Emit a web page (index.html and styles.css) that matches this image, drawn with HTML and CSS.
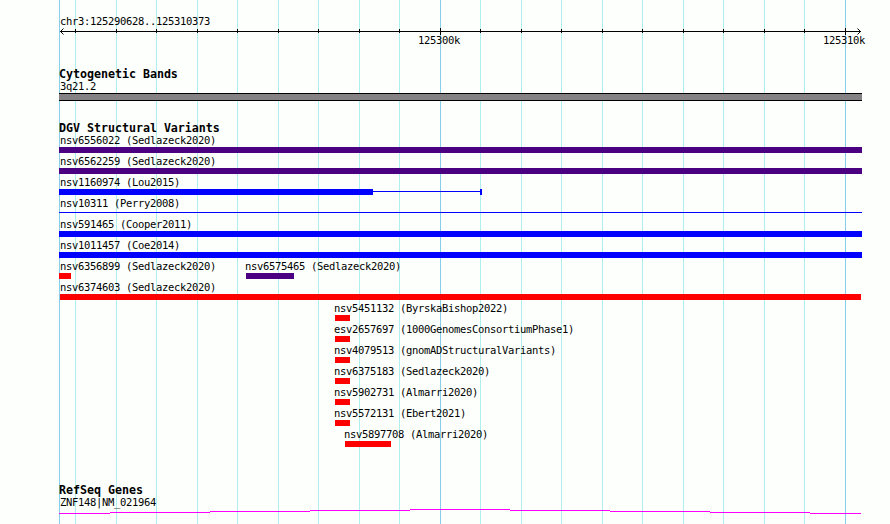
FILE: index.html
```html
<!DOCTYPE html>
<html>
<head>
    <meta charset="utf-8">
    <title>chr3:125290628..125310373</title>
    <link rel="stylesheet" href="styles.css">
</head>
<body>
    <div class="browser">
        <svg class="grid" width="890" height="524">
            <path class="minor" d="M75.5 0V524M116.5 0V524M156.5 0V524M197.5 0V524M237.5 0V524M278.5 0V524M318.5 0V524M359.5 0V524M399.5 0V524M480.5 0V524M521.5 0V524M561.5 0V524M602.5 0V524M642.5 0V524M683.5 0V524M723.5 0V524M764.5 0V524M804.5 0V524"/>
            <path class="major" d="M59.5 0V524M440.5 0V524M845.5 0V524"/>
        </svg>

        <div class="panel">
            <div class="ruler">
                <div class="label">chr3:125290628..125310373</div>
                <svg class="axis" width="831" height="20">
                    <path d="M1 3.5H802"/>
                    <path d="M16.5 1v4M57.5 1v4M97.5 1v4M138.5 1v4M178.5 1v4M219.5 1v4M259.5 1v4M300.5 1v4M340.5 1v4M421.5 1v4M462.5 1v4M502.5 1v4M543.5 1v4M583.5 1v4M624.5 1v4M664.5 1v4M705.5 1v4M745.5 1v4"/>
                    <path d="M381.5 0v7M786.5 0v7"/>
                    <path class="arrow" d="M4.5 0.5L1.5 3.5L4.5 6.5M798.5 0.5L801.5 3.5L798.5 6.5"/>
                    <text x="359" y="16">125300k</text>
                    <text x="764" y="16">125310k</text>
                </svg>
            </div>

            <div class="track cytoband">
                <h2>Cytogenetic Bands</h2>
                <div class="label">3q21.2</div>
                <div class="band"></div>
            </div>

            <div class="track variants">
                <h2>DGV Structural Variants</h2>
                <div class="row">
                    <div class="feature">
                        <div class="label">nsv6556022 (Sedlazeck2020)</div>
                        <div class="bar indigo" style="width: 803px"></div>
                    </div>
                </div>
                <div class="row">
                    <div class="feature">
                        <div class="label">nsv6562259 (Sedlazeck2020)</div>
                        <div class="bar indigo" style="width: 803px"></div>
                    </div>
                </div>
                <div class="row">
                    <div class="feature">
                        <div class="label">nsv1160974 (Lou2015)</div>
                        <div class="segments">
                            <div class="bar blue" style="width: 314px"></div>
                            <div class="connector" style="width: 107px"></div>
                            <div class="bar blue" style="width: 2px"></div>
                        </div>
                    </div>
                </div>
                <div class="row">
                    <div class="feature">
                        <div class="label">nsv10311 (Perry2008)</div>
                        <div class="segments">
                            <div class="connector" style="width: 803px"></div>
                        </div>
                    </div>
                </div>
                <div class="row">
                    <div class="feature">
                        <div class="label">nsv591465 (Cooper2011)</div>
                        <div class="bar blue" style="width: 803px"></div>
                    </div>
                </div>
                <div class="row">
                    <div class="feature">
                        <div class="label">nsv1011457 (Coe2014)</div>
                        <div class="bar blue" style="width: 803px"></div>
                    </div>
                </div>
                <div class="row">
                    <div class="feature" style="width: 187px">
                        <div class="label">nsv6356899 (Sedlazeck2020)</div>
                        <div class="bar red" style="width: 12px"></div>
                    </div>
                    <div class="feature inner">
                        <div class="label">nsv6575465 (Sedlazeck2020)</div>
                        <div class="bar indigo" style="width: 48px"></div>
                    </div>
                </div>
                <div class="row" style="padding-left: 1px">
                    <div class="feature first">
                        <div class="label">nsv6374603 (Sedlazeck2020)</div>
                        <div class="bar red" style="width: 801px"></div>
                    </div>
                </div>
                <div class="row" style="padding-left: 276px">
                    <div class="feature inner">
                        <div class="label">nsv5451132 (ByrskaBishop2022)</div>
                        <div class="bar red" style="width: 15px"></div>
                    </div>
                </div>
                <div class="row" style="padding-left: 276px">
                    <div class="feature inner">
                        <div class="label">esv2657697 (1000GenomesConsortiumPhase1)</div>
                        <div class="bar red" style="width: 15px"></div>
                    </div>
                </div>
                <div class="row" style="padding-left: 276px">
                    <div class="feature inner">
                        <div class="label">nsv4079513 (gnomADStructuralVariants)</div>
                        <div class="bar red" style="width: 15px"></div>
                    </div>
                </div>
                <div class="row" style="padding-left: 276px">
                    <div class="feature inner">
                        <div class="label">nsv6375183 (Sedlazeck2020)</div>
                        <div class="bar red" style="width: 15px"></div>
                    </div>
                </div>
                <div class="row" style="padding-left: 276px">
                    <div class="feature inner">
                        <div class="label">nsv5902731 (Almarri2020)</div>
                        <div class="bar red" style="width: 15px"></div>
                    </div>
                </div>
                <div class="row" style="padding-left: 276px">
                    <div class="feature inner">
                        <div class="label">nsv5572131 (Ebert2021)</div>
                        <div class="bar red" style="width: 15px"></div>
                    </div>
                </div>
                <div class="row" style="padding-left: 286px">
                    <div class="feature inner">
                        <div class="label">nsv5897708 (Almarri2020)</div>
                        <div class="bar red" style="width: 46px"></div>
                    </div>
                </div>
            </div>

            <div class="track genes">
                <h2>RefSeq Genes</h2>
                <div class="label">ZNF148|NM_021964</div>
                <svg class="gene" width="803" height="5">
                    <path d="M0 4.5H51M51 3.5H151M151 2.5H251M251 1.5H351M351 0.5H451M451 1.5H551M551 2.5H651M651 3.5H751M751 4.5H802"/>
                </svg>
            </div>
        </div>
    </div>
</body>
</html>
```

FILE: styles.css
```css
body {
    margin: 0;
    background: #fcfffc;
    color: #000;
    font: 10.5px/17px "DejaVu Sans Mono", monospace;
    letter-spacing: -0.32px;
}
.browser {
    position: relative;
    height: 524px;
    overflow: hidden;
}
.grid {
    position: absolute;
    top: 0;
    left: 0;
}
.grid path {
    shape-rendering: crispEdges;
}
.minor {
    stroke: #afeeee;
}
.major {
    stroke: #87ceeb;
}
.panel {
    position: relative;
    padding: 13px 0 0 59px;
}
svg {
    display: block;
}
.label {
    height: 15px;
    padding-left: 1px;
    white-space: nowrap;
}
.axis path {
    stroke: #000;
    fill: none;
    shape-rendering: crispEdges;
}
.axis .arrow {
    shape-rendering: auto;
}
.track h2 {
    margin: 0;
    height: 12px;
    font-size: 11.67px;
    line-height: 16px;
    font-weight: bold;
    letter-spacing: -0.026px;
    white-space: nowrap;
}
.cytoband {
    margin-top: 18px;
}
.band {
    box-sizing: border-box;
    width: 803px;
    height: 8px;
    background: #848284;
    border: solid #000;
    border-width: 1px 0;
}
.variants {
    margin-top: 19px;
}
.row {
    display: flex;
    height: 21px;
}
.first .label {
    padding-left: 0;
}
.inner .label {
    padding-left: 0;
    margin-left: -1px;
}
.segments {
    display: flex;
}
.bar {
    height: 6px;
}
.connector {
    height: 1px;
    margin-top: 2px;
    background: #00f;
}
.indigo {
    background: #4b0082;
}
.blue {
    background: #00f;
}
.red {
    background: #f00;
}
.genes {
    margin-top: 35px;
}
.gene path {
    stroke: #f0f;
    shape-rendering: crispEdges;
}
```
